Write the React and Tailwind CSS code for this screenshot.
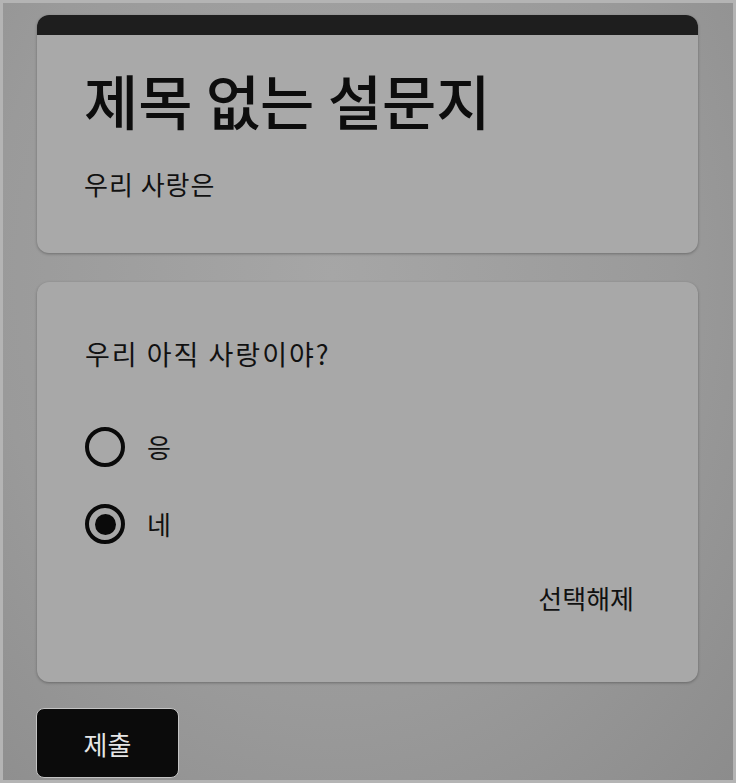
import React, { useState } from 'react';

const font = { fontFamily: '"Noto Sans CJK KR", "Noto Sans", sans-serif' };

const Radio = ({ checked, label, onClick }) => (
  <button type="button" onClick={onClick} className="flex items-center h-[48px] gap-[22px] text-left">
    <span className="w-[40px] h-[40px] rounded-full border-[4px] border-[#0a0a0a] flex items-center justify-center shrink-0">
      {checked && <span className="w-[21px] h-[21px] rounded-full bg-[#0a0a0a]" />}
    </span>
    <span className="text-[26px] leading-[36px] text-[#111]">{label}</span>
  </button>
);

const App = () => {
  const [answer, setAnswer] = useState('네');

  return (
    <div
      style={font}
      className="w-[736px] h-[783px] overflow-hidden border-[3px] border-[#b4b4b4] bg-[radial-gradient(ellipse_at_45%_35%,#a6a6a6,#9a9a9a_60%,#8c8c8c)] pt-[12px] pl-[34px] pr-[35px]"
    >
      {/* Header card */}
      <div className="rounded-[12px] bg-[#a9a9a9] shadow-[0_1px_3px_rgba(0,0,0,0.3)] overflow-hidden">
        <div className="h-[20px] bg-[#1e1e1e]" />
        <div className="pl-[47px] pt-[32px] pb-[51px]">
          <h1 className="text-[59px] leading-[66px] font-medium text-[#0d0d0d]">제목 없는 설문지</h1>
          <p className="mt-[33px] text-[26px] leading-[36px] tracking-[1px] text-[#111]">우리 사랑은</p>
        </div>
      </div>

      {/* Question card */}
      <div className="mt-[29px] rounded-[12px] bg-[#a8a8a8] shadow-[0_1px_3px_rgba(0,0,0,0.3)] pl-[48px] pr-[64px] pt-[54px] pb-[66px]">
        <h2 className="text-[27px] leading-[36px] tracking-[2px] text-[#111]">우리 아직 사랑이야?</h2>
        <div className="mt-[51px] flex flex-col gap-[29px]">
          <Radio label="응" checked={answer === '응'} onClick={() => setAnswer('응')} />
          <Radio label="네" checked={answer === '네'} onClick={() => setAnswer('네')} />
        </div>
        <div className="mt-[32px] flex justify-end">
          <button type="button" onClick={() => setAnswer(null)} className="text-[26px] leading-[36px] text-[#111]">
            선택해제
          </button>
        </div>
      </div>

      {/* Submit */}
      <button
        type="button"
        className="mt-[26px] -ml-[1px] w-[143px] h-[70px] rounded-[8px] bg-[#0b0b0b] border border-[#c4c4c4] text-[26px] text-[#e6e6e6]"
      >
        제출
      </button>
    </div>
  );
};

export default App;
